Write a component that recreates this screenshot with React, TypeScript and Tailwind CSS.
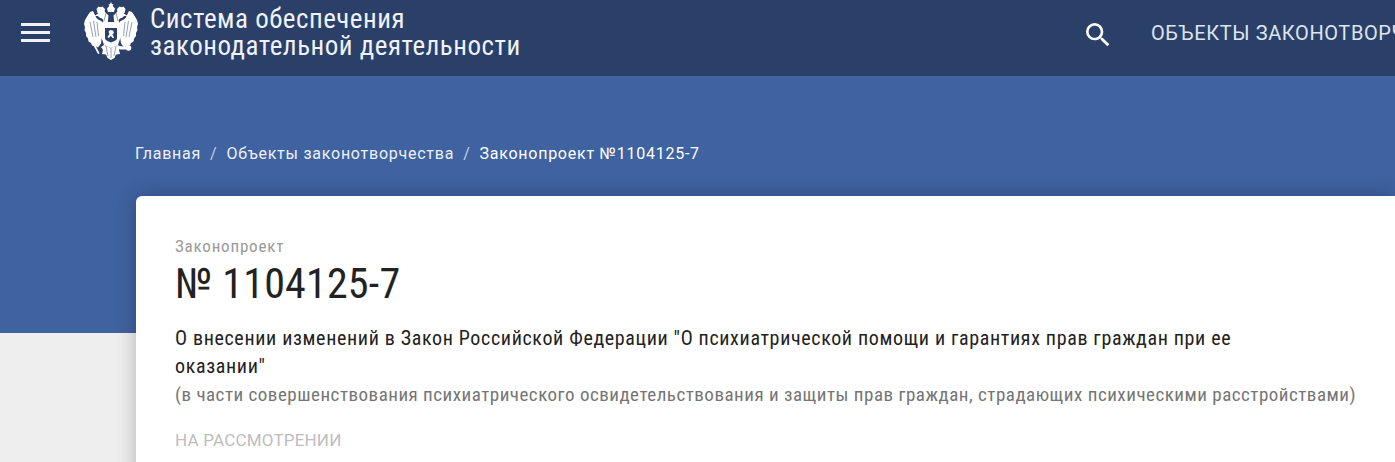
import React from 'react';
import { MdSearch } from 'react-icons/md';

const Eagle: React.FC = () => (
  <svg width="54" height="58" viewBox="0 0 54 58" className="shrink-0" fill="#fff">
    {/* centre crown */}
    <path d="M27 0l1 2 1.500.6-.8 1.400 2.300 2.500-1 3.500h-6l-1-3.500 2.300-2.500-.8-1.400 1.500-.6z" />
    {/* side crowns */}
    <path d="M12.500 7l2-2.500 2 .8 2-.8 2.500 2.500-.5 4h-7zM41.500 7l-2-2.500-2 .8-2-.8-2.500 2.500.5 4h7z" />
    {/* heads */}
    <path d="M21 10c-3-1.500-6-.5-7 1.500l-3.500 2.500 3.500 0c1 2 4 2 5 3.500l.5 5h4l1-9z" />
    <path d="M33 10c3-1.500 6-.5 7 1.500l3.500 2.500-3.500 0c-1 2-4 2-5 3.500l-.5 5h-4l-1-9z" />
    {/* wings */}
    <path d="M19 21c-1.500-3-4.500-2.500-6.500-5L9 9 6 10 4 13l-3 5 -1 4 1 3-.5 3 1.500 3 0 3 2 2.500.5 3 2.500 1.500 1 2.500 3 .5 3 1.500 3-4 1-7 1-8z" />
    <path d="M35 21c1.500-3 4.500-2.500 6.500-5L45 9l3 1 2 3 3 5 1 4-1 3 .5 3-1.500 3 0 3-2 2.500-.5 3-2.500 1.500-1 2.500-3 .5-3 1.500-3-4-1-7-1-8z" />
    {/* body */}
    <path d="M19 20h16l2 14-3 9-7 3-7-3-3-9z" />
    {/* tail and legs */}
    <path d="M20 43l7 3 7-3 3 2-2 3 1 4-4 .5-1.500 3.500-3.500 2-3.500-2-1.500-3.500-4-.5 1-4-2-3z" />
    {/* sceptre and orb */}
    <path d="M7 39l7 13 1.600-.8-7-13z" />
    <circle cx="44.500" cy="46" r="2.800" />
    <path d="M36 44l6 1v2.500l-6 0z" />
    {/* shield */}
    <path d="M21 26h12v10c0 2-2.300 3.400-6 4.500-3.700-1.100-6-2.500-6-4.500z" fill="#2a4069" />
    <path d="M26 28l3 .5 1 2.500-1.500 1 1.500 4h-1.500L27 34l-2.500 2-1-1 2-3-1-2z" />
    {/* feather gaps */}
    <path d="M6 20l3 15M9.500 19l2.500 16M13 20l1.500 14M48 20l-3 15M44.500 19 42 35M41 20l-1.500 14M20 19l2-8M34 19l-2-8M22 44l2 10M32 44l-2 10M27 46v10" stroke="#2a4069" strokeWidth=".5" fill="none" />
  </svg>
);

export default function App() {
  return (
    <div className="h-[462px] overflow-hidden bg-[#eeeeee] font-['Roboto',sans-serif]">
      <header className="flex h-[76px] items-center bg-[#2a4069] text-white">
        <div className="mb-[12px] ml-[21px] flex w-[29px] flex-col gap-[5px]">
          <span className="h-[3px] bg-[#f0f2f6]" />
          <span className="h-[3px] bg-[#f0f2f6]" />
          <span className="h-[3px] bg-[#f0f2f6]" />
        </div>
        <div className="mb-[15px] ml-[34px]">
          <Eagle />
        </div>
        <div className="mb-[10px] ml-[12px] whitespace-nowrap text-[27px] leading-[27px] tracking-[0.5px] text-[#f0f2f6] [font-stretch:75%]">
          Система обеспечения
          <br />
          законодательной деятельности
        </div>
        <MdSearch className="ml-auto mb-[6px]" size={32} />
        <span className="mb-[10px] ml-[37px] w-[244px] overflow-hidden whitespace-nowrap text-[20px] tracking-[0.6px] text-[#dfe4ee]">
          ОБЪЕКТЫ ЗАКОНОТВОРЧЕСТВА
        </span>
      </header>
      <div className="h-[257px] bg-[#3f62a0] pl-[135px] pt-[68px]">
        <nav className="flex text-[16px] leading-[20px] tracking-[0.75px] text-[#eef1f7]">
          <span>Главная</span>
          <span className="mx-[9px] text-[#c5cfe2]">/</span>
          <span>Объекты законотворчества</span>
          <span className="mx-[9px] text-[#c5cfe2]">/</span>
          <span className="text-white">Законопроект №1104125-7</span>
        </nav>
      </div>
      <main className="ml-[136px] mt-[-137px] h-[400px] rounded-tl-[6px] bg-white pl-[39px] pt-[40px] shadow-[0_0_20px_rgba(0,0,0,0.25)]">
        <div className="text-[17px] leading-[20px] tracking-[0.8px] text-[#9a9a9a] [font-stretch:85%]">Законопроект</div>
        <h1 className="mt-[4px] text-[42px] leading-[48px] tracking-[0.2px] text-[#222222] [font-stretch:75%]">№ 1104125-7</h1>
        <p className="mt-[16px] w-[1100px] text-[20px] leading-[28px] tracking-[0.65px] text-[#222222] [font-stretch:80%]">
          О внесении изменений в Закон Российской Федерации "О психиатрической помощи и гарантиях прав граждан при ее оказании"
        </p>
        <p className="mt-[1px] whitespace-nowrap text-[19px] leading-[28px] tracking-[0.5px] text-[#757575] [font-stretch:80%]">
          (в части совершенствования психиатрического освидетельствования и защиты прав граждан, страдающих психическими расстройствами)
        </p>
        <div className="mt-[21px] text-[17px] leading-[20px] tracking-[0.2px] text-[#bdbdbd]">НА РАССМОТРЕНИИ</div>
      </main>
    </div>
  );
}
